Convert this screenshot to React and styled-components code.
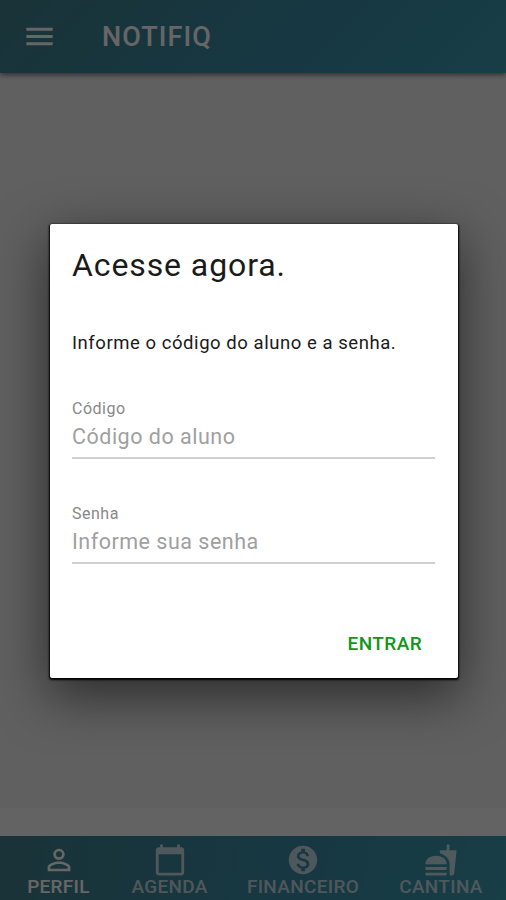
import { createGlobalStyle, styled } from "styled-components";
import {
  MdCalendarToday,
  MdFastfood,
  MdMenu,
  MdMonetizationOn,
  MdPersonOutline,
} from "react-icons/md";

const tabs = [
  { label: "PERFIL", icon: MdPersonOutline, width: 117, active: true },
  { label: "AGENDA", icon: MdCalendarToday, width: 105 },
  { label: "FINANCEIRO", icon: MdMonetizationOn, width: 162 },
  { label: "CANTINA", icon: MdFastfood, width: 114 },
];

const fields = [
  { id: "codigo", label: "Código", placeholder: "Código do aluno", type: "text" },
  { id: "senha", label: "Senha", placeholder: "Informe sua senha", type: "password" },
];

export default function App() {
  return (
    <>
      <GlobalStyle />
      <Screen>
        <Toolbar>
          <MenuButton aria-label="Menu">
            <MdMenu size={35} />
          </MenuButton>
          <AppName>NOTIFIQ</AppName>
        </Toolbar>
        <Content />
        <TabBar>
          {tabs.map(({ label, icon: Icon, width, active }) => (
            <Tab key={label} $width={width} $active={active}>
              <TabIcon>
                <Icon size={34} />
              </TabIcon>
              {label}
            </Tab>
          ))}
        </TabBar>
        <Backdrop>
          <Dialog role="dialog">
            <Title>Acesse agora.</Title>
            <Message>Informe o código do aluno e a senha.</Message>
            {fields.map((field) => (
              <Field key={field.id}>
                <FieldLabel htmlFor={field.id}>{field.label}</FieldLabel>
                <FieldInput
                  id={field.id}
                  type={field.type}
                  placeholder={field.placeholder}
                />
              </Field>
            ))}
            <Actions>
              <SubmitButton>ENTRAR</SubmitButton>
            </Actions>
          </Dialog>
        </Backdrop>
      </Screen>
    </>
  );
}

const GlobalStyle = createGlobalStyle`
  * {
    box-sizing: border-box;
  }

  body {
    margin: 0;
    font-family: Roboto, sans-serif;
  }

  button,
  input {
    font-family: inherit;
    border: 0;
    padding: 0;
    background: none;
  }
`;

const Screen = styled.div`
  position: relative;
  display: flex;
  flex-direction: column;
  height: 900px;
  overflow: hidden;
  background: #f0f0f0;
`;

const Toolbar = styled.header`
  display: flex;
  align-items: center;
  height: 73px;
  padding-left: 22px;
  background: linear-gradient(135deg, #40808c 0%, #3a8ca8 60%, #3c9bb0 100%);
  box-shadow: 0 2px 5px rgba(0, 0, 0, 0.5);
  z-index: 1;
`;

const MenuButton = styled.button`
  display: flex;
  color: #ffffff;
`;

const AppName = styled.h1`
  margin: 0 0 0 45px;
  font-size: 27px;
  font-weight: 500;
  letter-spacing: 1.1px;
  color: #ffffff;
`;

const Content = styled.main`
  flex: 1;
  border-bottom: 28px solid #f7f7f7;
`;

const TabBar = styled.nav`
  display: flex;
  height: 64px;
  background: linear-gradient(100deg, #40808c 0%, #3a8ca8 60%, #3c9bb0 100%);
`;

const Tab = styled.button`
  display: flex;
  flex-direction: column;
  align-items: center;
  width: ${(props) => props.$width}px;
  padding-top: 7px;
  font-size: 19px;
  font-weight: 500;
  line-height: 21px;
  letter-spacing: 0.3px;
  color: ${(props) => (props.$active ? "#ffffff" : "rgba(255, 255, 255, 0.7)")};
`;

const TabIcon = styled.span`
  display: flex;
  align-items: center;
  justify-content: center;
  height: 33px;
`;

const Backdrop = styled.div`
  position: absolute;
  inset: 0;
  z-index: 2;
  padding: 224px 48px 0 50px;
  background: rgba(0, 0, 0, 0.6);
`;

const Dialog = styled.section`
  height: 454px;
  padding: 21px 23px 0 22px;
  border-radius: 2px;
  background: #ffffff;
  box-shadow: 0 1px 2px 1px #000000, 0 16px 52px 2px rgba(0, 0, 0, 0.55);
`;

const Title = styled.h2`
  margin: 0;
  font-size: 32px;
  font-weight: 400;
  line-height: 40px;
  letter-spacing: 0.9px;
  color: #1a1a1a;
`;

const Message = styled.p`
  margin: 45px 0 42px;
  font-size: 18.5px;
  line-height: 26px;
  letter-spacing: 0.55px;
  color: #1a1a1a;
`;

const Field = styled.div`
  display: flex;
  flex-direction: column;
  height: 61px;
  margin-bottom: 44px;
  border-bottom: 2px solid #d0d0d0;
`;

const FieldLabel = styled.label`
  font-size: 16px;
  line-height: 22px;
  letter-spacing: 0.5px;
  color: #888888;
`;

const FieldInput = styled.input`
  height: 32px;
  font-size: 21.5px;
  letter-spacing: 0.5px;
  outline: none;

  &::placeholder {
    color: #a0a0a0;
    opacity: 1;
  }
`;

const Actions = styled.div`
  display: flex;
  justify-content: flex-end;
  padding: 20px 13px 0 0;
`;

const SubmitButton = styled.button`
  font-size: 19px;
  font-weight: 500;
  line-height: 32px;
  letter-spacing: 0.4px;
  color: #109618;
`;
